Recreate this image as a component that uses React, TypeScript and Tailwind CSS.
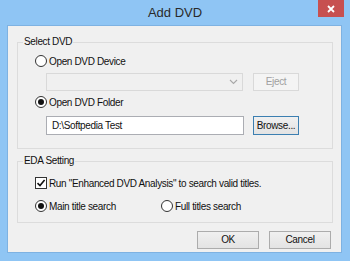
import React from 'react';

const font = { fontFamily: '"Liberation Sans", Arial, sans-serif' };

const Radio = ({ checked }: { checked?: boolean }) => (
  <span className="w-[12px] h-[12px] rounded-full border border-[#333] bg-white flex items-center justify-center shrink-0">
    {checked && <span className="w-[6px] h-[6px] rounded-full bg-[#111]" />}
  </span>
);

const Checkbox = ({ checked }: { checked?: boolean }) => (
  <span className="w-[12px] h-[12px] border border-[#333] bg-white flex items-center justify-center shrink-0">
    {checked && (
      <svg width="10" height="10" viewBox="0 0 10 10">
        <path d="M1.5 5.2 L4 7.6 L8.6 2" stroke="#111" strokeWidth="1.6" fill="none" />
      </svg>
    )}
  </span>
);

const Group = ({ title, className, children }: { title: string; className?: string; children: React.ReactNode }) => (
  <div className={`relative border border-[#dcdcdc] ${className ?? ''}`}>
    <span className="absolute -top-[9px] left-[5px] bg-[#f0f0f0] px-[1px] leading-[16px] text-[#111]">{title}</span>
    {children}
  </div>
);

const Button = ({ children, className }: { children: React.ReactNode; className?: string }) => (
  <button className={`h-[18px] bg-gradient-to-b from-[#f0f0f0] to-[#e3e3e3] border text-[#111] leading-[16px] ${className ?? ''}`}>
    {children}
  </button>
);

export default function App() {
  return (
    <div className="w-[350px] h-[261px] bg-[#8fc5f4] flex flex-col text-[10px] tracking-[-0.35px]" style={font}>
      {/* title bar */}
      <div className="relative h-[25px] flex items-center justify-center">
        <span className="text-[13px] text-[#2a2a2a] mt-[1px] tracking-normal">Add DVD</span>
        <div className="absolute top-0 right-[6px] w-[26px] h-[17px] bg-[#c75050] flex items-center justify-center">
          <svg width="8" height="8" viewBox="0 0 8 8">
            <path d="M1 1 L7 7 M7 1 L1 7" stroke="#fff" strokeWidth="1.8" />
          </svg>
        </div>
      </div>

      {/* client area */}
      <div className="ml-[7px] mr-[8px] h-[228px] bg-[#f0f0f0] border border-[#7eb2e2] flex flex-col">
        <Group title="Select DVD" className="ml-[9px] mr-[8px] mt-[16px] h-[107px] pl-[17px] pt-[10px]">
          <label className="flex items-center gap-[2px] h-[16px]">
            <Radio />
            <span className="text-[#111]">Open DVD Device</span>
          </label>
          <div className="flex mt-[4px] ml-[11px]">
            <div className="w-[197px] h-[18px] border border-[#d9d9d9] bg-[#f0f0f0] flex items-center justify-end pr-[4px]">
              <svg width="9" height="6" viewBox="0 0 9 6">
                <path d="M1 1 L4.5 4.5 L8 1" stroke="#a8a8a8" strokeWidth="1.1" fill="none" />
              </svg>
            </div>
            <Button className="ml-[10px] w-[46px] border-[#d9d9d9] !from-[#f4f4f4] !to-[#f4f4f4] !text-[#a0a0a0]">Eject</Button>
          </div>
          <label className="flex items-center gap-[2px] h-[16px] mt-[3px]">
            <Radio checked />
            <span className="text-[#111]">Open DVD Folder</span>
          </label>
          <div className="flex mt-[6px] ml-[11px]">
            <div className="w-[198px] h-[19px] border border-[#abadb3] bg-white flex items-center pl-[5px] text-[#111]">
              D:\Softpedia Test
            </div>
            <Button className="ml-[9px] w-[46px] h-[19px] border-[#3c7fb1]">Browse...</Button>
          </div>
        </Group>

        <Group title="EDA Setting" className="ml-[9px] mr-[8px] mt-[12px] h-[62px] pl-[17px] pt-[13px]">
          <label className="flex items-center gap-[2px] h-[16px]">
            <Checkbox checked />
            <span className="text-[#111]">Run "Enhanced DVD Analysis" to search valid titles.</span>
          </label>
          <div className="flex mt-[7px]">
            <label className="flex items-center gap-[2px] h-[16px] w-[126px]">
              <Radio checked />
              <span className="text-[#111]">Main title search</span>
            </label>
            <label className="flex items-center gap-[2px] h-[16px]">
              <Radio />
              <span className="text-[#111]">Full titles search</span>
            </label>
          </div>
        </Group>

        <div className="flex justify-end gap-[10px] mr-[10px] mt-[8px]">
          <Button className="w-[62px] border-[#acacac]">OK</Button>
          <Button className="w-[62px] border-[#acacac]">Cancel</Button>
        </div>
      </div>
    </div>
  );
}
